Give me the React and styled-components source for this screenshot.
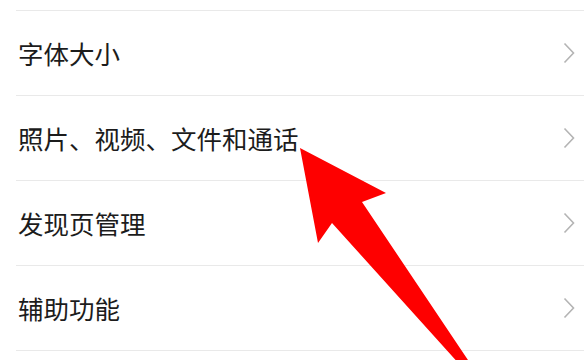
import React from "react";
import styled, { createGlobalStyle } from "styled-components";

const GlobalStyle = createGlobalStyle`
  html, body {
    margin: 0;
    padding: 0;
    background: #ffffff;
  }
  body {
    font-family: "Noto Sans CJK SC", "Noto Sans", sans-serif;
  }
`;

const Page = styled.div`
  position: relative;
  width: 584px;
  height: 360px;
  overflow: hidden;
  background: #ffffff;
`;

const List = styled.div`
  display: flex;
  flex-direction: column;
  padding-top: 10px;
`;

const Row = styled.div`
  display: flex;
  align-items: center;
  justify-content: space-between;
  height: 84px;
  margin-left: 16px;
  padding: 0 9px 0 2px;
  border-top: 1px solid #e9e9e9;

  &:last-child {
    border-bottom: 1px solid #e9e9e9;
  }
`;

const Label = styled.span`
  font-size: 25.5px;
  color: #1c1c1c;
  letter-spacing: 0;
  line-height: 1;
`;

const Chevron = () => (
  <svg width="12" height="22" viewBox="0 0 12 22">
    <path d="M1.5 1.5 L10.5 11 L1.5 20.5" fill="none" stroke="#b4b4b4" strokeWidth="1.6" />
  </svg>
);

const Arrow = styled.svg`
  position: absolute;
  left: 0;
  top: 0;
  pointer-events: none;
`;

const items = ["字体大小", "照片、视频、文件和通话", "发现页管理", "辅助功能"];

const App = () => {
  return (
    <Page>
      <GlobalStyle />
      <List>
        {items.map((t) => (
          <Row key={t}>
            <Label>{t}</Label>
            <Chevron />
          </Row>
        ))}
      </List>
      <Arrow width="584" height="360" viewBox="0 0 584 360">
        <polygon
          points="300,148 386,193 362,202 472,366 461,366 332,223 318,243"
          fill="#fe0000"
        />
      </Arrow>
    </Page>
  );
};

export default App;
